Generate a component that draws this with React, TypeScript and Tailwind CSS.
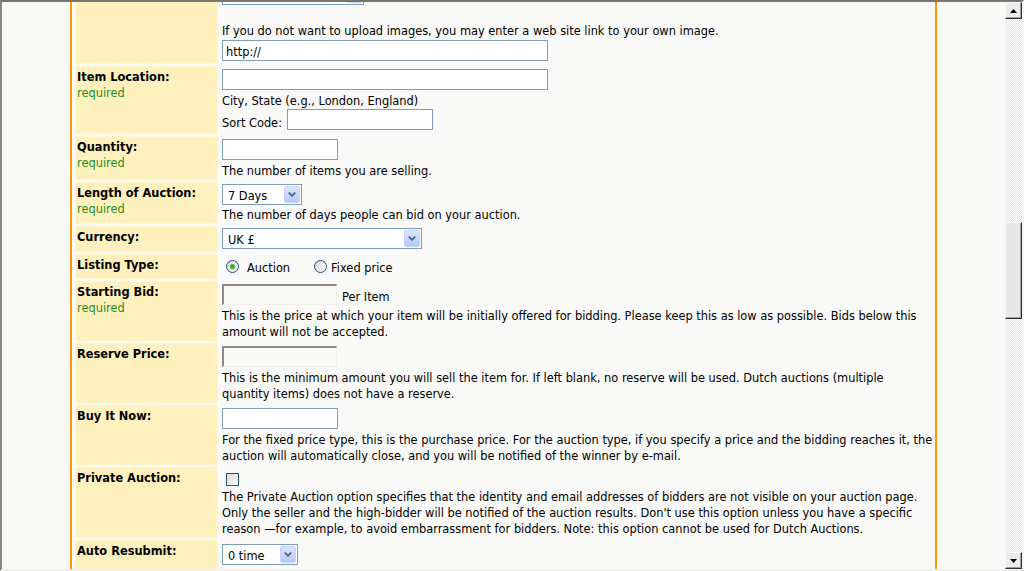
import React from "react";

const Chevron = () => (
  <svg width="8" height="5" viewBox="0 0 8 5">
    <path d="M0.8 0.6 L4 3.8 L7.2 0.6" fill="none" stroke="#4d6185" strokeWidth="1.8" />
  </svg>
);

const Select = ({ value, className }: { value: string; className: string }) => (
  <div className={`flex h-[21px] items-center border border-[#7f9db9] bg-white ${className}`}>
    <span className="relative top-[1px] flex-1 pl-[5px] leading-[16px] whitespace-nowrap">{value}</span>
    <div className="m-[1px] flex h-[17px] w-[16px] items-center justify-center rounded-[2px] border border-[#c3d3fd] bg-gradient-to-b from-[#dbe5fe] to-[#b6c9f6]">
      <Chevron />
    </div>
  </div>
);

const Input = ({ className }: { className: string }) => (
  <div className={`h-[21px] border border-[#7f9db9] bg-white ${className}`} />
);

const InsetInput = ({ className }: { className: string }) => (
  <div className={`h-[21px] border-t-2 border-l-2 border-r border-b border-t-[#8e8a80] border-l-[#8e8a80] border-r-[#f1efe8] border-b-[#f1efe8] bg-[#fafaf8] ${className}`} />
);

const Radio = ({ checked }: { checked?: boolean }) => (
  <div className="flex h-[13px] w-[13px] items-center justify-center rounded-full border border-[#1c5180] bg-gradient-to-br from-[#d8d8d2] to-white">
    {checked && <div className="h-[5px] w-[5px] rounded-full bg-[#3aae3a]" />}
  </div>
);

const Label = ({ title, required }: { title: string; required?: boolean }) => (
  <div className="w-[143px] shrink-0 border border-dotted border-[#fffaf0] bg-[#fff1bd] pl-[1px] pt-[2px] leading-[16px]">
    <div className="font-bold">{title}</div>
    {required && <div className="text-[#1f8f1f]">required</div>}
  </div>
);

const Row = ({ label, required, children }: { label: string; required?: boolean; children: React.ReactNode }) => (
  <div className="flex">
    <Label title={label} required={required} />
    <div className="flex flex-1 flex-col py-[2px] pl-[4px] leading-[16px]">{children}</div>
  </div>
);

const Line = ({ children }: { children: React.ReactNode }) => (
  <div className="h-[16px] whitespace-nowrap leading-[16px]">
    <span className="relative top-[1px]">{children}</span>
  </div>
);

const ScrollButton = ({ up }: { up?: boolean }) => (
  <div className="flex h-[17px] w-[17px] items-center justify-center border border-t-[#f8f8f8] border-l-[#f8f8f8] border-r-[#303030] border-b-[#303030] bg-[#ececec] shadow-[inset_-1px_-1px_0_#a0a0a0]">
    <svg width="7" height="4" viewBox="0 0 7 4">
      {up ? <path d="M3.5 0 L7 4 L0 4 Z" fill="#000" /> : <path d="M0 0 L7 0 L3.5 4 Z" fill="#000" />}
    </svg>
  </div>
);

const Scrollbar = () => (
  <div className="flex w-[17px] shrink-0 flex-col">
    <ScrollButton up />
    <div className="flex flex-1 flex-col bg-[repeating-conic-gradient(#e4e4de_0%_25%,#ffffff_0%_50%)] bg-[length:2px_2px]">
      <div className="h-[203px]" />
      <div className="h-[97px] border border-t-[#f8f8f8] border-l-[#f8f8f8] border-r-[#303030] border-b-[#303030] bg-[#e8e8e8] shadow-[inset_-1px_-1px_0_#a0a0a0]" />
      <div className="flex-1" />
    </div>
    <ScrollButton />
  </div>
);

export default function App() {
  return (
    <div className="flex h-[571px] w-[1024px] overflow-hidden border-2 border-t-[#78756c] border-l-[#8a8a86] border-r-[#f4f4f2] border-b-[#efefed] bg-[#f9f9f7] font-['DejaVu_Sans',sans-serif] text-[11.4px] text-black">
      <div className="flex-1 overflow-hidden">
        <div className="ml-[68px] -mt-[20px] flex w-[867px] flex-col gap-[2px] border-x-2 border-[#ff9900] pl-[3px] pr-[2px] pb-[40px]">
          <Row label="">
            <Select value="" className="w-[142px] mb-[1px]" />
            <div className="h-[16px]" />
            <Line>If you do not want to upload images, you may enter a web site link to your own image.</Line>
            <div className="mt-[2px] mb-[1px] flex h-[21px] w-[326px] items-center border border-[#7f9db9] bg-white pl-[3px]">
              <span className="relative top-[1px]">http://</span>
            </div>
          </Row>

          <Row label="Item Location:" required>
            <Input className="w-[326px] mt-[1px] mb-[2px]" />
            <Line>City, State (e.g., London, England)</Line>
            <div className="flex h-[24px] items-start">
              <span className="mt-[7px] leading-[16px]">Sort Code:</span>
              <Input className="ml-[5px] mt-[1px] w-[146px]" />
            </div>
          </Row>

          <Row label="Quantity:" required>
            <Input className="w-[116px] mt-[1px] mb-[2px]" />
            <Line>The number of items you are selling.</Line>
          </Row>

          <Row label="Length of Auction:" required>
            <Select value="7 Days" className="w-[80px] mb-[1px]" />
            <Line>The number of days people can bid on your auction.</Line>
          </Row>

          <Row label="Currency:">
            <Select value="UK £" className="w-[200px] mb-[1px]" />
          </Row>

          <Row label="Listing Type:">
            <div className="flex h-[21px] items-center">
              <div className="ml-[4px]">
                <Radio checked />
              </div>
              <span className="relative top-[1px] ml-[8px]">Auction</span>
              <div className="ml-[24px]">
                <Radio />
              </div>
              <span className="relative top-[1px] ml-[4px]">Fixed price</span>
            </div>
          </Row>

          <Row label="Starting Bid:" required>
            <div className="flex h-[24px] items-start">
              <InsetInput className="w-[115px] mt-[1px]" />
              <span className="ml-[5px] mt-[6px] leading-[16px]">Per Item</span>
            </div>
            <Line>This is the price at which your item will be initially offered for bidding. Please keep this as low as possible. Bids below this</Line>
            <Line>amount will not be accepted.</Line>
          </Row>

          <Row label="Reserve Price:">
            <InsetInput className="w-[115px] mt-[1px] mb-[2px]" />
            <Line>This is the minimum amount you will sell the item for. If left blank, no reserve will be used. Dutch auctions (multiple</Line>
            <Line>quantity items) does not have a reserve.</Line>
          </Row>

          <Row label="Buy It Now:">
            <Input className="w-[116px] mt-[1px] mb-[2px]" />
            <Line>For the fixed price type, this is the purchase price. For the auction type, if you specify a price and the bidding reaches it, the</Line>
            <Line>auction will automatically close, and you will be notified of the winner by e-mail.</Line>
          </Row>

          <Row label="Private Auction:">
            <div className="ml-[4px] mt-[4px] mb-[2px] h-[13px] w-[13px] border border-[#1c5180] bg-gradient-to-br from-[#d8d8d2] to-white" />
            <Line>The Private Auction option specifies that the identity and email addresses of bidders are not visible on your auction page.</Line>
            <Line>Only the seller and the high-bidder will be notified of the auction results. Don't use this option unless you have a specific</Line>
            <Line>reason —for example, to avoid embarrassment for bidders. Note: this option cannot be used for Dutch Auctions.</Line>
          </Row>

          <Row label="Auto Resubmit:">
            <Select value="0 time" className="w-[76px] mt-[2px] mb-[1px]" />
            <Line>In the event that your auction ends without a winner, we can automatically resubmit it for you.</Line>
            <Line>Please select how many times you would like the auction to be relisted.</Line>
          </Row>
        </div>
      </div>
      <Scrollbar />
    </div>
  );
}
